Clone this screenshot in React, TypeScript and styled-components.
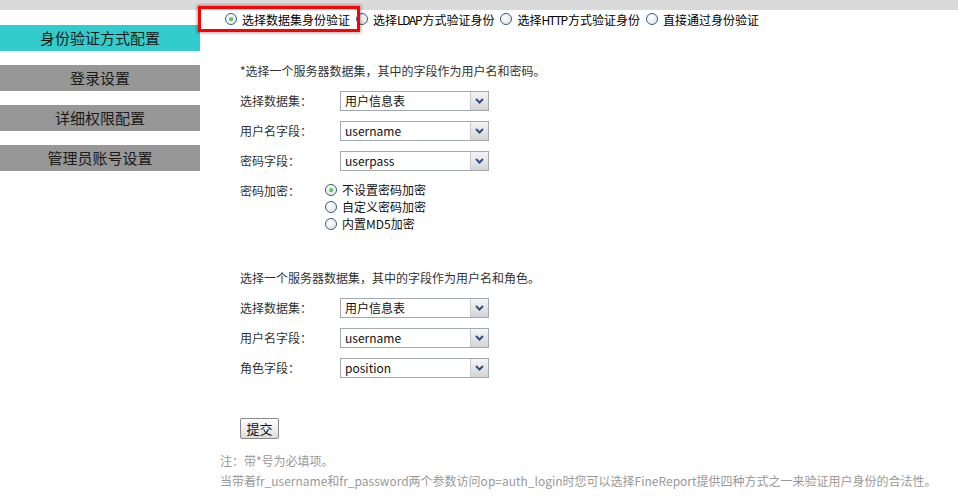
import React from 'react';
import styled, { createGlobalStyle } from 'styled-components';

const GlobalStyle = createGlobalStyle`
  html, body {
    margin: 0;
    padding: 0;
    background: #ffffff;
    font-family: "Noto Sans CJK SC", "Liberation Sans", sans-serif;
    color: #222;
  }
`;

const TopBar = styled.div`
  height: 10px;
  background: #dadada;
`;

const Layout = styled.div`
  display: flex;
  align-items: flex-start;
`;

const Sidebar = styled.div`
  width: 200px;
  flex-shrink: 0;
  padding-top: 15px;
  display: flex;
  flex-direction: column;
  gap: 14px;
`;

const NavItem = styled.div<{ $active?: boolean }>`
  height: 26px;
  line-height: 26px;
  text-align: center;
  font-size: 15px;
  color: #1a1a1a;
  background: ${(p) => (p.$active ? '#33cccc' : '#979797')};
`;

const Main = styled.div`
  flex: 1;
`;

const ModeRow = styled.div`
  position: relative;
  display: flex;
  align-items: center;
  height: 20px;
  margin-top: -1px;
  padding-left: 25px;
  font-size: 12px;
  color: #000;
`;

const Highlight = styled.div`
  position: absolute;
  left: -2px;
  top: -3px;
  width: 156px;
  height: 20px;
  border: 3px solid #ff0000;
  box-shadow: 0 0 3px 1px rgba(0, 0, 0, 0.35);
  pointer-events: none;
`;

const Option = styled.label`
  display: inline-flex;
  align-items: center;
  gap: 5px;
  margin-right: 6px;
  white-space: nowrap;
`;

const Latin = styled.span`
  letter-spacing: -1.3px;
  margin-right: 1px;
`;

const Circle = styled.span<{ $checked?: boolean }>`
  position: relative;
  display: inline-block;
  width: 10px;
  height: 10px;
  border-radius: 50%;
  border: 1px solid #3c5a7a;
  background: radial-gradient(circle at 40% 35%, #ffffff 0%, #eef0f2 45%, #c6ccd3 100%);
  box-shadow: inset 0 0 0 1px rgba(255, 255, 255, 0.7);
  flex-shrink: 0;

  &::after {
    content: '';
    display: ${(p) => (p.$checked ? 'block' : 'none')};
    position: absolute;
    left: 3px;
    top: 3px;
    width: 4px;
    height: 4px;
    border-radius: 50%;
    background: radial-gradient(circle at 40% 40%, #7be07b 0%, #21a321 80%);
  }
`;

const Form = styled.div`
  padding-left: 40px;
  display: flex;
  flex-direction: column;
  font-size: 12px;
  color: #333;
`;

const Hint = styled.div<{ $top: number }>`
  height: 20px;
  line-height: 20px;
  margin-top: ${(p) => p.$top}px;
  margin-bottom: 10px;
`;

const Fields = styled.div`
  display: flex;
  flex-direction: column;
  gap: 10px;
`;

const Row = styled.div`
  display: flex;
  align-items: flex-start;
`;

const Label = styled.div<{ $width?: number }>`
  width: ${(p) => p.$width ?? 100}px;
  height: 20px;
  line-height: 20px;
  flex-shrink: 0;
`;

const SelectBox = styled.div`
  display: flex;
  width: 147px;
  height: 18px;
  border: 1px solid #a2a9b1;
  background: #fff;
`;

const SelectValue = styled.div`
  flex: 1;
  line-height: 18px;
  padding-left: 4px;
  color: #111;
`;

const ArrowButton = styled.div`
  width: 17px;
  border-left: 1px solid #c9ccd0;
  background: linear-gradient(#f4f4f4, #e4e4e4 55%, #d3d3d3);
  display: flex;
  align-items: center;
  justify-content: center;
`;

const RadioStack = styled.div`
  display: flex;
  flex-direction: column;
`;

const StackOption = styled.label`
  display: flex;
  align-items: center;
  gap: 5px;
  height: 17px;
  color: #111;
`;

const SubmitButton = styled.button`
  margin-top: 40px;
  align-self: flex-start;
  width: 39px;
  height: 21px;
  padding: 0;
  font-family: inherit;
  font-size: 13px;
  color: #111;
  border: 1px solid #8a8a8a;
  border-radius: 2px;
  background: linear-gradient(#fdfdfd, #f0f0f0 50%, #dcdcdc);
`;

const Notes = styled.div`
  margin-top: 12px;
  padding-left: 20px;
  font-size: 12px;
  color: #999;
`;

const NoteLine = styled.div`
  height: 20px;
  line-height: 20px;
  white-space: nowrap;
`;

const Chevron = () => (
  <svg width="9" height="6" viewBox="0 0 9 6">
    <path d="M1 1 L4.5 4.5 L8 1" fill="none" stroke="#2d4d8c" strokeWidth="2" />
  </svg>
);

const Select = ({ value }: { value: string }) => (
  <SelectBox>
    <SelectValue>{value}</SelectValue>
    <ArrowButton>
      <Chevron />
    </ArrowButton>
  </SelectBox>
);

const navs = ['身份验证方式配置', '登录设置', '详细权限配置', '管理员账号设置'];

export default function App() {
  return (
    <>
      <GlobalStyle />
      <TopBar />
      <Layout>
        <Sidebar>
          {navs.map((n, i) => (
            <NavItem key={n} $active={i === 0}>{n}</NavItem>
          ))}
        </Sidebar>
        <Main>
          <ModeRow>
            <Option><Circle $checked /><span>选择数据集身份验证</span></Option>
            <Option><Circle /><span>选择<Latin>LDAP</Latin>方式验证身份</span></Option>
            <Option><Circle /><span>选择<Latin>HTTP</Latin>方式验证身份</span></Option>
            <Option><Circle /><span>直接通过身份验证</span></Option>
            <Highlight />
          </ModeRow>
          <Form>
            <Hint $top={32}>*选择一个服务器数据集，其中的字段作为用户名和密码。</Hint>
            <Fields>
              <Row>
                <Label>选择数据集：</Label>
                <Select value="用户信息表" />
              </Row>
              <Row>
                <Label>用户名字段：</Label>
                <Select value="username" />
              </Row>
              <Row>
                <Label>密码字段：</Label>
                <Select value="userpass" />
              </Row>
              <Row>
                <Label $width={85}>密码加密：</Label>
                <RadioStack>
                  <StackOption><Circle $checked />不设置密码加密</StackOption>
                  <StackOption><Circle />自定义密码加密</StackOption>
                  <StackOption><Circle />内置MD5加密</StackOption>
                </RadioStack>
              </Row>
            </Fields>
            <Hint $top={36}>选择一个服务器数据集，其中的字段作为用户名和角色。</Hint>
            <Fields>
              <Row>
                <Label>选择数据集：</Label>
                <Select value="用户信息表" />
              </Row>
              <Row>
                <Label>用户名字段：</Label>
                <Select value="username" />
              </Row>
              <Row>
                <Label>角色字段：</Label>
                <Select value="position" />
              </Row>
            </Fields>
            <SubmitButton>提交</SubmitButton>
          </Form>
          <Notes>
            <NoteLine>注：带*号为必填项。</NoteLine>
            <NoteLine>当带着fr_username和fr_password两个参数访问op=auth_login时您可以选择FineReport提供四种方式之一来验证用户身份的合法性。</NoteLine>
          </Notes>
        </Main>
      </Layout>
    </>
  );
}
